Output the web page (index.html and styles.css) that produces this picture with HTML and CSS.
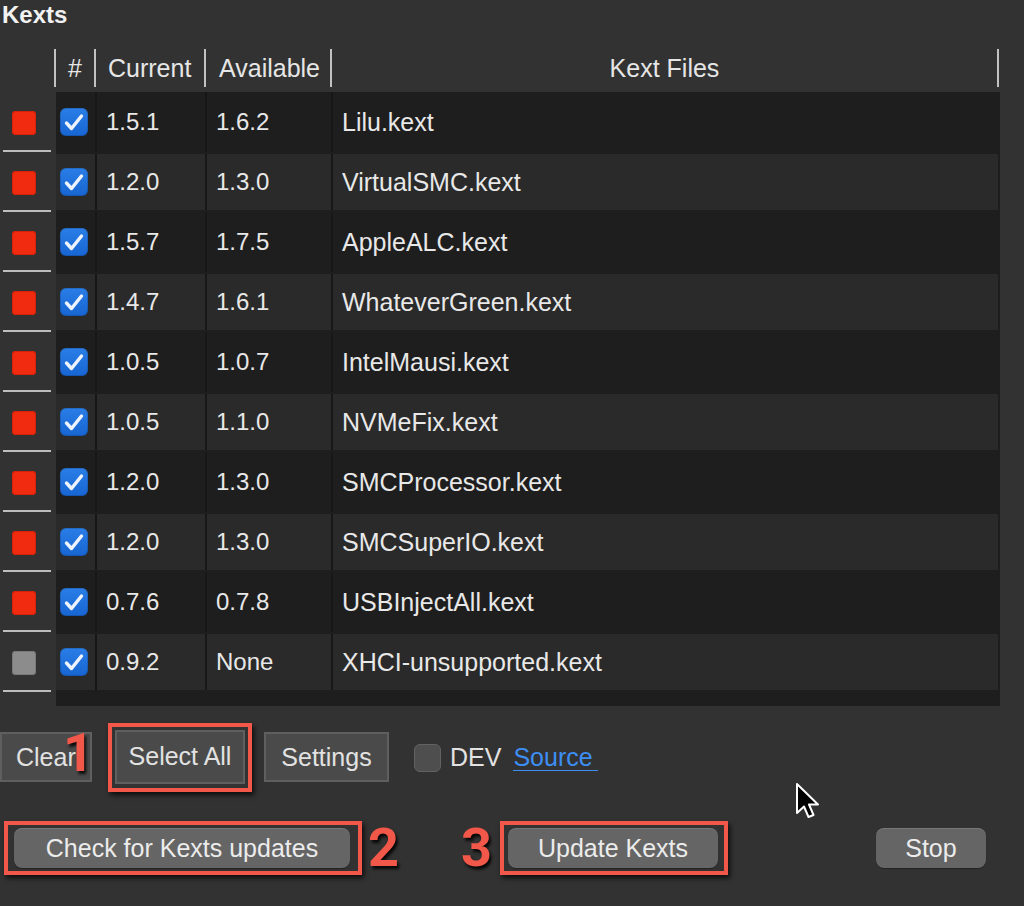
FILE: index.html
```html
<!DOCTYPE html>
<html>
<head>
<meta charset="utf-8">
<link rel="stylesheet" href="styles.css">
</head>
<body>
<div class="page">
  <h1 class="title">Kexts</h1>

  <div class="thead">
    <div class="hgut"></div>
    <div class="hc hc-chk">#</div>
    <div class="hc hc-cur">Current</div>
    <div class="hc hc-av">Available</div>
    <div class="hc hc-files">Kext Files</div>
    <div class="hc hc-end"></div>
  </div>

  <div class="tbody">
    <div class="row"><div class="gut"><span class="sq red"></span></div><div class="cells"><div class="cell c-chk"><span class="cb"><svg viewBox="0 0 28 28"><path d="M6.5 15 L11.5 20.5 L21.5 8"/></svg></span></div><div class="cell c-cur">1.5.1</div><div class="cell c-av">1.6.2</div><div class="cell c-files">Lilu.kext</div></div></div>
    <div class="row alt"><div class="gut"><span class="sq red"></span></div><div class="cells"><div class="cell c-chk"><span class="cb"><svg viewBox="0 0 28 28"><path d="M6.5 15 L11.5 20.5 L21.5 8"/></svg></span></div><div class="cell c-cur">1.2.0</div><div class="cell c-av">1.3.0</div><div class="cell c-files">VirtualSMC.kext</div></div></div>
    <div class="row"><div class="gut"><span class="sq red"></span></div><div class="cells"><div class="cell c-chk"><span class="cb"><svg viewBox="0 0 28 28"><path d="M6.5 15 L11.5 20.5 L21.5 8"/></svg></span></div><div class="cell c-cur">1.5.7</div><div class="cell c-av">1.7.5</div><div class="cell c-files">AppleALC.kext</div></div></div>
    <div class="row alt"><div class="gut"><span class="sq red"></span></div><div class="cells"><div class="cell c-chk"><span class="cb"><svg viewBox="0 0 28 28"><path d="M6.5 15 L11.5 20.5 L21.5 8"/></svg></span></div><div class="cell c-cur">1.4.7</div><div class="cell c-av">1.6.1</div><div class="cell c-files">WhateverGreen.kext</div></div></div>
    <div class="row"><div class="gut"><span class="sq red"></span></div><div class="cells"><div class="cell c-chk"><span class="cb"><svg viewBox="0 0 28 28"><path d="M6.5 15 L11.5 20.5 L21.5 8"/></svg></span></div><div class="cell c-cur">1.0.5</div><div class="cell c-av">1.0.7</div><div class="cell c-files">IntelMausi.kext</div></div></div>
    <div class="row alt"><div class="gut"><span class="sq red"></span></div><div class="cells"><div class="cell c-chk"><span class="cb"><svg viewBox="0 0 28 28"><path d="M6.5 15 L11.5 20.5 L21.5 8"/></svg></span></div><div class="cell c-cur">1.0.5</div><div class="cell c-av">1.1.0</div><div class="cell c-files">NVMeFix.kext</div></div></div>
    <div class="row"><div class="gut"><span class="sq red"></span></div><div class="cells"><div class="cell c-chk"><span class="cb"><svg viewBox="0 0 28 28"><path d="M6.5 15 L11.5 20.5 L21.5 8"/></svg></span></div><div class="cell c-cur">1.2.0</div><div class="cell c-av">1.3.0</div><div class="cell c-files">SMCProcessor.kext</div></div></div>
    <div class="row alt"><div class="gut"><span class="sq red"></span></div><div class="cells"><div class="cell c-chk"><span class="cb"><svg viewBox="0 0 28 28"><path d="M6.5 15 L11.5 20.5 L21.5 8"/></svg></span></div><div class="cell c-cur">1.2.0</div><div class="cell c-av">1.3.0</div><div class="cell c-files">SMCSuperIO.kext</div></div></div>
    <div class="row"><div class="gut"><span class="sq red"></span></div><div class="cells"><div class="cell c-chk"><span class="cb"><svg viewBox="0 0 28 28"><path d="M6.5 15 L11.5 20.5 L21.5 8"/></svg></span></div><div class="cell c-cur">0.7.6</div><div class="cell c-av">0.7.8</div><div class="cell c-files">USBInjectAll.kext</div></div></div>
    <div class="row alt"><div class="gut"><span class="sq grey"></span></div><div class="cells"><div class="cell c-chk"><span class="cb"><svg viewBox="0 0 28 28"><path d="M6.5 15 L11.5 20.5 L21.5 8"/></svg></span></div><div class="cell c-cur">0.9.2</div><div class="cell c-av">None</div><div class="cell c-files">XHCI-unsupported.kext</div></div></div>
    <div class="tail"></div>
  </div>

  <div class="controls1">
    <button class="btn-sq btn-clear">Clear</button>
    <div class="hl hl-1"><button class="btn-sq btn-select">Select All</button></div>
    <button class="btn-sq btn-settings">Settings</button>
    <span class="devbox"></span>
    <span class="dev">DEV</span>
    <a class="source">Source</a>
    <span class="num num-1">1</span>
  </div>

  <div class="controls2">
    <div class="hl hl-2"><button class="btn-rd btn-check">Check for Kexts updates</button></div>
    <span class="num num-2">2</span>
    <span class="num num-3">3</span>
    <div class="hl hl-3"><button class="btn-rd btn-update">Update Kexts</button></div>
    <button class="btn-rd btn-stop">Stop</button>
    <svg class="cursor" viewBox="0 0 26 40" width="26" height="40"><path d="M2 2 L2 31 L9 24.5 L13.5 35 L18.5 33 L14 22.5 L23 22.5 Z" fill="#000" stroke="#fff" stroke-width="2" stroke-linejoin="round"/></svg>
  </div>
</div>
</body>
</html>
```

FILE: styles.css
```css
html, body {
  margin: 0;
  padding: 0;
  background: #323232;
}
.page {
  position: relative;
  width: 1024px;
  height: 906px;
  font-family: "Liberation Sans", Arial, sans-serif;
  color: #e4e4e4;
  overflow: hidden;
}
.title {
  margin: 0;
  padding-left: 2px;
  height: 30px;
  line-height: 30px;
  font-size: 24px;
  font-weight: bold;
  color: #f2f2f2;
}

/* header */
.thead {
  display: flex;
  margin-top: 19px;
  height: 38px;
  align-items: stretch;
}
.hgut { width: 54px; }
.hc {
  border-left: 2px solid #c2c2c2;
  display: flex;
  align-items: center;
  font-size: 25px;
  color: #e6e6e6;
  box-sizing: border-box;
}
.hc-chk { width: 40px; justify-content: center; }
.hc-cur { width: 110px; padding-left: 12px; }
.hc-av { width: 126px; padding-left: 13px; }
.hc-files { width: 667px; justify-content: center; }
.hc-end { width: 2px; }

/* body */
.tbody { margin-top: 5px; }
.row {
  display: flex;
  height: 60px;
}
.gut {
  width: 48px;
  margin-left: 3px;
  margin-right: 5px;
  box-sizing: border-box;
  border-bottom: 2px solid #bdbdbd;
  display: flex;
  align-items: center;
  padding-left: 9px;
  padding-top: 3px;
}
.sq {
  width: 24px;
  height: 24px;
  border-radius: 4px;
  display: block;
}
.sq.red { background: #f12b10; box-shadow: inset 0 0 0 1px #d62208; }
.sq.grey { background: #8c8c8c; box-shadow: inset 0 0 0 1px #7a7a7a; }
.cells {
  width: 944px;
  display: flex;
  background: #1e1e1e;
  padding-right: 2px;
  box-sizing: border-box;
}
.row.alt .cells {
  padding-top: 2px;
  padding-bottom: 2px;
}
.row.alt .cell { background: #2a2a2a; }
.cell {
  display: flex;
  align-items: center;
  font-size: 25px;
  color: #e8e8e8;
  box-sizing: border-box;
  padding-left: 9px;
}
.cell + .cell { border-left: 2px solid #171717; padding-left: 9px; }
.c-chk { width: 39px; padding-left: 4px; }
.c-cur { width: 110px; font-size: 24px; }
.c-av { width: 126px; font-size: 24px; }
.c-files { flex: 1; }
.cb {
  width: 28px;
  height: 28px;
  border-radius: 6px;
  background: linear-gradient(#2a7ee6, #1765d2);
  display: block;
  box-shadow: inset 0 0 0 1px rgba(0,0,0,0.15);
}
.cb svg { width: 28px; height: 28px; display: block; }
.cb path {
  fill: none;
  stroke: #eef4ff;
  stroke-width: 3.4;
  stroke-linecap: round;
  stroke-linejoin: round;
}
.tail {
  margin-left: 56px;
  width: 944px;
  height: 14px;
  background: #1e1e1e;
}

/* controls */
button {
  font-family: "Liberation Sans", Arial, sans-serif;
  margin: 0;
  cursor: default;
}
.controls1 {
  position: relative;
  display: flex;
  align-items: center;
  margin-top: 16px;
  height: 70px;
}
.btn-sq {
  height: 50px;
  box-sizing: border-box;
  background: #4a4a4a;
  border: 2px solid #5f5f5f;
  color: #e2e2e2;
  font-size: 25px;
  padding: 0;
}
.btn-clear { width: 92px; text-align: left; padding-left: 14px; }
.btn-select { width: 130px; height: 54px; }
.btn-settings { width: 125px; margin-left: 12px; }
.hl {
  border: 4px solid #f2584a;
  box-shadow: 2px 3px 5px rgba(0,0,0,0.75);
  box-sizing: border-box;
}
.hl-1 {
  margin-left: 16px;
  padding: 3px 3px 4px 3px;
}
.devbox {
  width: 27px;
  height: 28px;
  box-sizing: border-box;
  border-radius: 6px;
  background: #4e4e4e;
  border: 1px solid #626262;
  margin-left: 25px;
  margin-top: 2px;
}
.dev {
  font-size: 25px;
  color: #e2e2e2;
  margin-left: 9px;
}
.source {
  font-size: 25px;
  color: #3d8ef4;
  margin-left: 12px;
  padding-right: 5px;
  border-bottom: 1px solid #3d8ef4;
  line-height: 26px;
}
.num {
  font-family: Roboto, "Liberation Sans", sans-serif;
  font-weight: bold;
  font-size: 54px;
  line-height: 1;
  color: #f2584a;
  text-shadow: 2px 3px 3px rgba(0,0,0,0.85);
}
.num-1 {
  position: absolute;
  left: 63px;
  top: 4px;
}
.controls2 {
  position: relative;
  display: flex;
  align-items: center;
  margin-top: 28px;
  height: 56px;
}
.btn-rd {
  height: 40px;
  border-radius: 8px;
  border: none;
  background: #656565;
  color: #ececec;
  font-size: 25px;
  padding: 0;
  box-shadow: inset 0 1px 0 rgba(255,255,255,0.12), 0 1px 1px rgba(0,0,0,0.3);
}
.hl-2 {
  margin-left: 4px;
  padding: 3px 8px 3px 6px;
}
.btn-check { width: 336px; }
.num-2 { margin-left: 6px; }
.num-3 { margin-left: 62px; }
.hl-3 {
  margin-left: 8px;
  padding: 3px 6px 3px 4px;
}
.btn-update { width: 210px; }
.btn-stop { width: 110px; margin-left: 148px; }
.cursor {
  position: absolute;
  left: 795px;
  top: -38px;
}
```
